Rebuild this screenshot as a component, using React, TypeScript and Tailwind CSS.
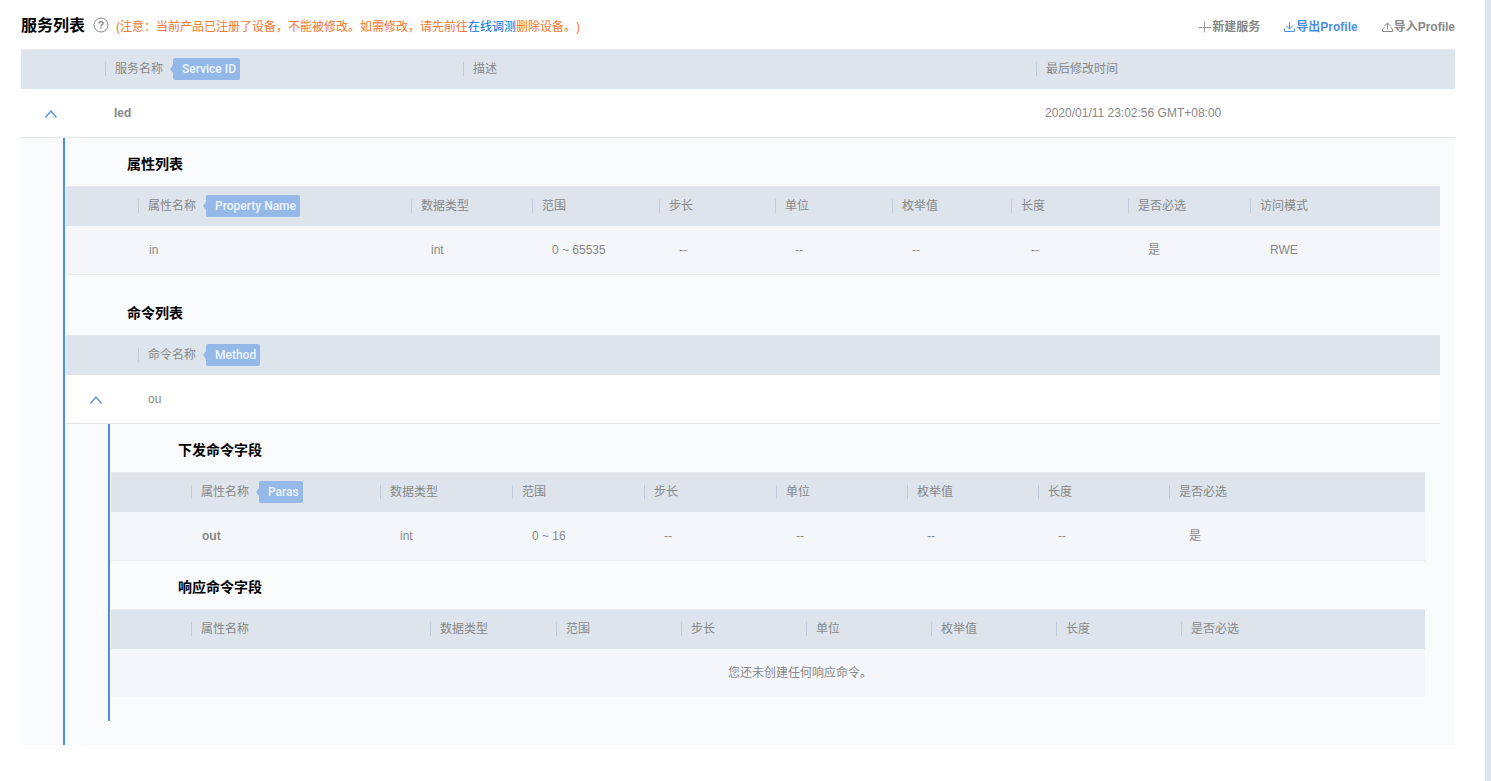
import { useState } from "react";
import type { ReactNode } from "react";

type Column = {
  label: string;
  width?: number;
  badge?: string;
};

const serviceColumns: Column[] = [
  { label: "服务名称", width: 358, badge: "Service ID" },
  { label: "描述", width: 573 },
  { label: "最后修改时间" },
];

const propertyColumns: Column[] = [
  { label: "属性名称", width: 273, badge: "Property Name" },
  { label: "数据类型", width: 121 },
  { label: "范围", width: 127 },
  { label: "步长", width: 116 },
  { label: "单位", width: 117 },
  { label: "枚举值", width: 119 },
  { label: "长度", width: 117 },
  { label: "是否必选", width: 122 },
  { label: "访问模式" },
];

const commandColumns: Column[] = [{ label: "命令名称", badge: "Method" }];

const paraColumns: Column[] = [
  { label: "属性名称", width: 189, badge: "Paras" },
  { label: "数据类型", width: 132 },
  { label: "范围", width: 132 },
  { label: "步长", width: 132 },
  { label: "单位", width: 131 },
  { label: "枚举值", width: 131 },
  { label: "长度", width: 131 },
  { label: "是否必选" },
];

const responseColumns: Column[] = [
  { label: "属性名称", width: 239 },
  { label: "数据类型", width: 126 },
  { label: "范围", width: 125 },
  { label: "步长", width: 125 },
  { label: "单位", width: 125 },
  { label: "枚举值", width: 125 },
  { label: "长度", width: 125 },
  { label: "是否必选" },
];

const propertyRow = ["in", "int", "0 ~ 65535", "--", "--", "--", "--", "是", "RWE"];
const paraRow = ["out", "int", "0 ~ 16", "--", "--", "--", "--", "是"];

function Badge({ children }: { children: ReactNode }) {
  return (
    <span className="ml-[7px] flex items-center">
      <svg width="3" height="8" viewBox="0 0 3 8" className="fill-[#94b9e8]" aria-hidden="true">
        <path d="M3 0v8L0 4z" />
      </svg>
      <span className="h-[22px] rounded-xs bg-[#94b9e8] pl-[9px] pr-1 font-['Roboto','Noto_Sans_CJK_SC',sans-serif] font-medium leading-[22px] text-[#eef4fc]">
        {children}
      </span>
    </span>
  );
}

function DataTable({ columns, lead, children }: { columns: Column[]; lead: number; children: ReactNode }) {
  return (
    <table className="w-full table-fixed border-separate border-spacing-0 text-left">
      <colgroup>
        <col style={{ width: lead }} />
        {columns.map((col) => (
          <col key={col.label} style={{ width: col.width }} />
        ))}
      </colgroup>
      <thead>
        <tr className="h-10 bg-[#dde4ec]">
          <td className="border-t border-[#e6eaee]" />
          {columns.map((col) => (
            <th key={col.label} className="border-t border-[#e6eaee] px-0 pb-[2px] pt-0 font-normal">
              <div className="flex h-[22px] items-center whitespace-nowrap">
                <span className="h-[14px] border-l border-[#c3cedd] pl-[9px] leading-[14px]">{col.label}</span>
                {col.badge && <Badge>{col.badge}</Badge>}
              </div>
            </th>
          ))}
        </tr>
      </thead>
      <tbody>{children}</tbody>
    </table>
  );
}

function ValueRow({ values, boldName }: { values: string[]; boldName?: boolean }) {
  return (
    <tr className="h-[49px] bg-[#f5f6fa]">
      <td className="border-b border-[#ebecef]" />
      {values.map((value, i) => (
        <td
          key={i}
          className={`border-b border-[#ebecef] py-0 pr-0 ${i === 0 ? "pl-[11px]" : "pl-5"} ${
            i === 0 && boldName ? "font-bold" : ""
          }`}
        >
          {value}
        </td>
      ))}
    </tr>
  );
}

function ToggleCell({ open, onClick, label }: { open: boolean; onClick: () => void; label: string }) {
  return (
    <td className="border-b border-[#e3e6e9] p-0">
      <button type="button" aria-label={label} aria-expanded={open} onClick={onClick} className="ml-6 flex h-5 items-end pb-1">
        <svg
          width="12"
          height="10"
          viewBox="0 0 12 10"
          className={`fill-none stroke-[#4a90e2] ${open ? "" : "rotate-180"}`}
          aria-hidden="true"
        >
          <path strokeWidth="1.2" d="M0.5 8.5L6 2L11.5 8.5" />
        </svg>
      </button>
    </td>
  );
}

function DetailRow({ span, children }: { span: number; children: ReactNode }) {
  return (
    <tr className="bg-[#fafbfd]">
      <td colSpan={span} className="py-0 pl-[42px] pr-[15px]">
        <div className="border-l-2 border-[#4a90e2] pb-6 pl-px">{children}</div>
      </td>
    </tr>
  );
}

function CommandDetail() {
  return (
    <>
      <h4 className="flex h-12 items-center pl-[67px] pt-1 text-sm font-bold text-black">下发命令字段</h4>
      <DataTable columns={paraColumns} lead={80}>
        <ValueRow values={paraRow} boldName />
      </DataTable>
      <h4 className="flex h-12 items-center pl-[67px] pt-1 text-sm font-bold text-black">响应命令字段</h4>
      <DataTable columns={responseColumns} lead={80}>
        <tr className="h-12 bg-[#f5f6fa]">
          <td colSpan={9} className="py-0 pl-16 pr-0 text-center">
            您还未创建任何响应命令。
          </td>
        </tr>
      </DataTable>
    </>
  );
}

function ServiceDetail() {
  const [open, setOpen] = useState(true);

  return (
    <>
      <h3 className="flex h-12 items-center pl-[61px] pt-1 text-sm font-bold text-black">属性列表</h3>
      <DataTable columns={propertyColumns} lead={72}>
        <ValueRow values={propertyRow} />
      </DataTable>
      <h3 className="mt-3 flex h-12 items-center pl-[61px] pt-1 text-sm font-bold text-black">命令列表</h3>
      <DataTable columns={commandColumns} lead={72}>
        <tr className="h-[49px] bg-white">
          <ToggleCell open={open} onClick={() => setOpen(!open)} label="ou" />
          <td className="border-b border-[#e3e6e9] py-0 pl-[10px]">ou</td>
        </tr>
        {open && (
          <DetailRow span={2}>
            <CommandDetail />
          </DetailRow>
        )}
      </DataTable>
    </>
  );
}

export default function App() {
  const [open, setOpen] = useState(true);

  return (
    <div className="min-h-screen border-r-6 border-[#dde4ec] bg-white pl-[21px] pr-[30px] font-['Liberation_Sans','Noto_Sans_CJK_SC',sans-serif] text-xs text-[#888] [text-spacing-trim:space-all]">
      <header className="flex h-[49px] items-center justify-between whitespace-nowrap">
        <div className="flex items-center">
          <h2 className="pt-[2px] text-base font-bold text-black">服务列表</h2>
          <button type="button" aria-label="帮助" className="ml-2">
            <svg width="16" height="16" viewBox="0 0 16 16" className="fill-none stroke-[#888]" aria-hidden="true">
              <circle cx="8" cy="8" r="7" />
              <path strokeWidth="1.5" d="M6 6.6C6 5.3 6.8 4.7 8 4.7s2 .7 2 1.7c0 1.3-2 1.3-2 2.8M8 10.2v1.5" />
            </svg>
          </button>
          <p className="ml-[7px] pt-1 text-[#f4772e]">
            (注意：当前产品已注册了设备，不能被修改。如需修改，请先前往
            <a href="#debug" className="text-[#0073e6]">
              在线调测
            </a>
            删除设备。)
          </p>
        </div>
        <div className="flex gap-6 pt-1 font-bold">
          <button type="button" className="flex items-center gap-px">
            <svg width="12" height="12" viewBox="0 0 12 12" className="fill-none stroke-[#999]" aria-hidden="true">
              <path d="M5.5 0.5v11M0 6.5h12" />
            </svg>
            新建服务
          </button>
          <button type="button" className="flex items-center gap-px text-[#4a90e2]">
            <svg width="11" height="12" viewBox="0 0 11 12" className="fill-none stroke-current" aria-hidden="true">
              <path d="M5.5 1.5v6.5M2.5 5l3 3l3-3M0.5 7.5v3h10v-3" />
            </svg>
            导出Profile
          </button>
          <button type="button" className="flex items-center gap-px">
            <svg width="11" height="12" viewBox="0 0 11 12" className="fill-none stroke-current" aria-hidden="true">
              <path d="M5.5 8.5V2M2.5 5l3-3l3 3M2.5 6.5l-2 1.5v2.5h10V8l-2-1.5" />
            </svg>
            导入Profile
          </button>
        </div>
      </header>

      <DataTable columns={serviceColumns} lead={84}>
        <tr className="h-[49px] bg-white">
          <ToggleCell open={open} onClick={() => setOpen(!open)} label="led" />
          <td className="border-b border-[#e3e6e9] py-0 pl-[9px] font-bold">led</td>
          <td className="border-b border-[#e3e6e9]" />
          <td className="border-b border-[#e3e6e9] py-0 pl-[9px]">2020/01/11 23:02:56 GMT+08:00</td>
        </tr>
        {open && (
          <DetailRow span={4}>
            <ServiceDetail />
          </DetailRow>
        )}
      </DataTable>
    </div>
  );
}
